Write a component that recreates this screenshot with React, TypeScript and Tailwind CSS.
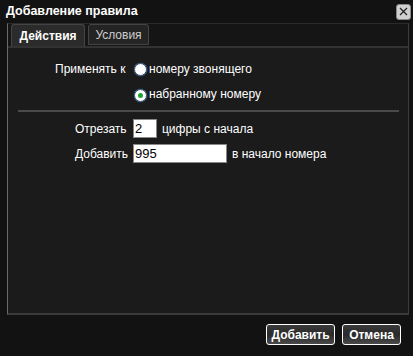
import React from "react";

function Radio({ checked }: { checked?: boolean }) {
  return (
    <span className="inline-flex items-center justify-center w-[13px] h-[13px] rounded-full bg-white border border-[#2a4a6a] shadow-[0_0_1px_#6aa0d0]">
      {checked ? <span className="w-[5px] h-[5px] rounded-full bg-[#22a033]" /> : null}
    </span>
  );
}

export default function App() {
  return (
    <div
      className="w-[413px] h-[356px] bg-[#121212] text-white flex flex-col overflow-hidden"
      style={{ fontFamily: "'Liberation Sans', Arial, sans-serif" }}
    >
      <div className="h-[23px] flex items-center justify-between pl-[6px] pr-[2px]">
        <span className="text-[12.5px] font-bold text-white leading-none">Добавление правила</span>
        <span className="w-[15px] h-[16px] rounded-[3px] bg-[#d0d0d0] border border-[#888] flex items-center justify-center">
          <svg width="11" height="11" viewBox="0 0 11 11">
            <path d="M2 2 L9 9 M9 2 L2 9" stroke="#222" strokeWidth="1.3" fill="none" />
          </svg>
        </span>
      </div>
      <div className="ml-[7px] w-[402px] h-[292px] bg-[#1b1b1b] border-l border-l-[#6a6a6a] border-r border-r-[#3c3c3c] border-b-2 border-b-[#3a3a3a] border-t border-t-[#2a2a2a] flex flex-col">
        <div className="h-[24px] bg-[#151515] border-b-2 border-b-[#333] flex items-end pl-[3px] gap-[3px]">
          <div className="h-[22px] w-[74px] rounded-t-[3px] bg-[#2b2b2b] border border-b-0 border-[#444] flex items-center justify-center text-[12px] font-bold text-white">
            Действия
          </div>
          <div className="h-[21px] w-[61px] mb-[1px] rounded-t-[3px] bg-[#242424] border border-[#444] flex items-center justify-center text-[12px] text-[#cfcfcf]">
            Условия
          </div>
        </div>
        <div className="flex flex-col text-[12px] text-white">
          <div className="flex items-center mt-[13px] h-[16px]">
            <span className="ml-[47px] w-[79px]">Применять к</span>
            <Radio />
            <span className="ml-[2px]">номеру звонящего</span>
          </div>
          <div className="flex items-center mt-[9px] h-[16px]">
            <span className="ml-[126px]"><Radio checked /></span>
            <span className="ml-[2px]">набранному номеру</span>
          </div>
          <div className="ml-[10px] w-[381px] h-[2px] bg-[#4a4a4a] mt-[8px]" />
          <div className="flex items-center mt-[7px] h-[19px]">
            <span className="ml-[67px] w-[58px]">Отрезать</span>
            <span className="w-[24px] h-[19px] bg-white border border-[#888] text-black text-[13px] leading-[17px] pl-[1px]">2</span>
            <span className="ml-[5px]">цифры с начала</span>
          </div>
          <div className="flex items-center mt-[6px] h-[19px]">
            <span className="ml-[67px] w-[58px]">Добавить</span>
            <span className="w-[94px] h-[19px] bg-white border border-[#888] text-black text-[13px] leading-[17px] pl-[1px]">995</span>
            <span className="ml-[5px]">в начало номера</span>
          </div>
        </div>
      </div>
      <div className="flex justify-end gap-[7px] pr-[12px] mt-[9px]">
        <button className="h-[21px] w-[69px] rounded-[3px] border border-white bg-gradient-to-b from-[#3a3a3a] via-[#2a2a2a] to-[#4a4a4a] text-[12px] font-bold text-white leading-none">
          Добавить
        </button>
        <button className="h-[21px] w-[59px] rounded-[3px] border border-white bg-gradient-to-b from-[#3a3a3a] via-[#2a2a2a] to-[#4a4a4a] text-[12px] font-bold text-white leading-none">
          Отмена
        </button>
      </div>
    </div>
  );
}
